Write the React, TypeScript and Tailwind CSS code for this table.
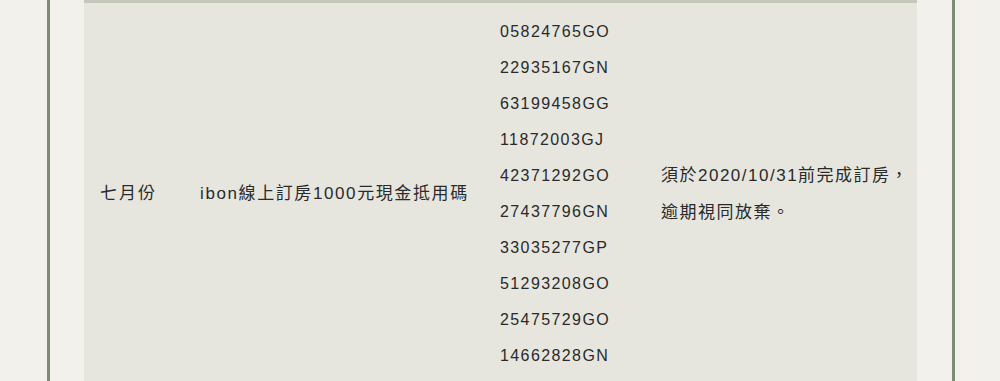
import React from "react";

const codes = [
  "05824765GO",
  "22935167GN",
  "63199458GG",
  "11872003GJ",
  "42371292GO",
  "27437796GN",
  "33035277GP",
  "51293208GO",
  "25475729GO",
  "14662828GN",
];

export default function App() {
  return (
    <div
      className="w-[1000px] h-[381px] overflow-hidden bg-[#f3f1ec] text-[#2a2a2a]"
      style={{ fontFamily: '"Liberation Sans", "Noto Sans CJK TC", sans-serif' }}
    >
      <div className="ml-[47px] w-[908px] h-full border-x-[3px] border-[#7d8c72] pl-[34px] pr-[35px]">
        <div className="w-[833px] border-t-[3px] border-[#c4c8bb] bg-[#e6e6df]">
          <div className="grid grid-cols-[100px_316px_145px_272px] items-center pt-[11px] pb-[10px] text-[17px]">
            <div className="pl-[16px] tracking-[2px]">七月份</div>
            <div className="pl-[16px] tracking-[1.6px]">ibon線上訂房1000元現金抵用碼</div>
            <div className="flex flex-col text-[16px]">
              {codes.map((c) => (
                <div key={c} className="leading-[36px] tracking-[1.4px]">
                  {c}
                </div>
              ))}
            </div>
            <div className="pl-[16px] leading-[37px] tracking-[1.5px]">
              <div>須於2020/10/31前完成訂房，</div>
              <div>逾期視同放棄。</div>
            </div>
          </div>
        </div>
      </div>
    </div>
  );
}
